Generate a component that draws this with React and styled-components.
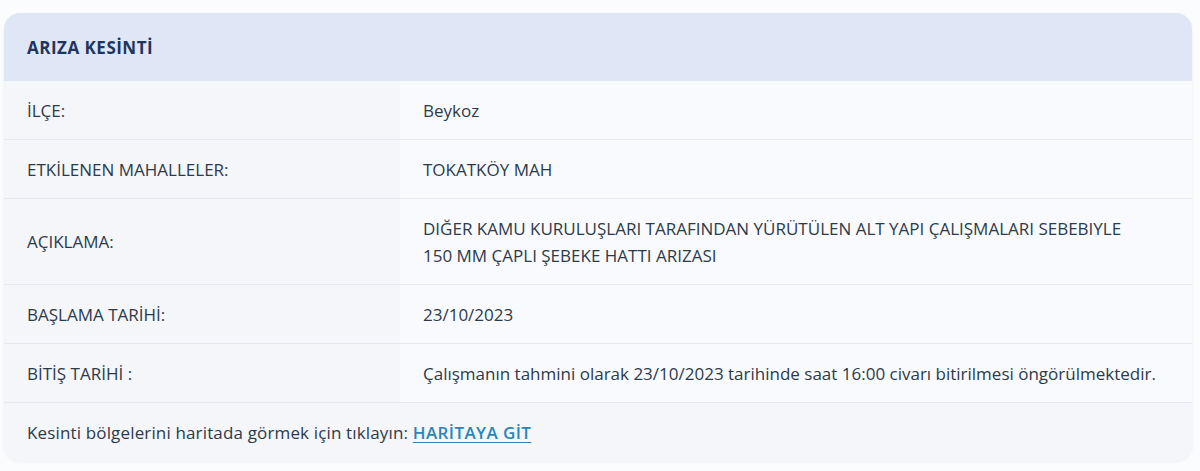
import React from "react";
import styled, { createGlobalStyle } from "styled-components";

const Global = createGlobalStyle`
  body {
    margin: 0;
    background: #fbfcfe;
    font-family: "Open Sans", Lato, sans-serif;
  }
`;

const rows = [
  { label: "İLÇE:", value: "Beykoz" },
  { label: "ETKİLENEN MAHALLELER:", value: "TOKATKÖY MAH" },
  {
    label: "AÇIKLAMA:",
    value: (
      <>
        DIĞER KAMU KURULUŞLARI TARAFINDAN YÜRÜTÜLEN ALT YAPI ÇALIŞMALARI SEBEBIYLE
        <br />
        150 MM ÇAPLI ŞEBEKE HATTI ARIZASI
      </>
    ),
    tall: true,
  },
  { label: "BAŞLAMA TARİHİ:", value: "23/10/2023" },
  {
    label: "BİTİŞ TARİHİ :",
    value:
      "Çalışmanın tahmini olarak 23/10/2023 tarihinde saat 16:00 civarı bitirilmesi öngörülmektedir.",
  },
];

const App = () => {
  return (
    <Page>
      <Global />
      <Card>
        <Header>ARIZA KESİNTİ</Header>
        {rows.map((r, i) => (
          <Row key={i} $tall={r.tall}>
            <Label>{r.label}</Label>
            <Value>{r.value}</Value>
          </Row>
        ))}
        <Footer>
          Kesinti bölgelerini haritada görmek için tıklayın:{" "}
          <MapLink href="#">HARİTAYA GİT</MapLink>
        </Footer>
      </Card>
    </Page>
  );
};

const Page = styled.div`
  padding: 13px 8px 9px 4px;
`;

const Card = styled.div`
  background: #f4f6fa;
  border-radius: 16px;
  overflow: hidden;
  box-shadow: 0 1px 3px rgba(30, 50, 90, 0.06);
`;

const Header = styled.div`
  height: 68px;
  display: flex;
  align-items: center;
  padding-left: 23px;
  background: #dfe7f6;
  color: #1e3461;
  font-weight: 700;
  font-size: 17px;
  letter-spacing: 0.5px;
`;

const Row = styled.div`
  display: grid;
  grid-template-columns: 396px 1fr;
  height: ${(p) => (p.$tall ? "85px" : "58px")};
  border-bottom: 1px solid #e6eaf0;
  color: #2c3a4b;
  font-size: 17px;
`;

const Label = styled.div`
  display: flex;
  align-items: center;
  padding-left: 23px;
  background: #f4f6fa;
  font-weight: 500;
`;

const Value = styled.div`
  display: flex;
  align-items: center;
  padding-left: 23px;
  background: #f9fafd;
  line-height: 27px;
`;

const Footer = styled.div`
  height: 58px;
  display: flex;
  align-items: center;
  padding-left: 23px;
  color: #2c3a4b;
  font-size: 17px;
  letter-spacing: 0.15px;
  white-space: pre;
`;

const MapLink = styled.a`
  color: #2a86b8;
  font-weight: 600;
  letter-spacing: 0.4px;
  text-decoration: underline;
  text-underline-offset: 3px;
`;

export default App;
